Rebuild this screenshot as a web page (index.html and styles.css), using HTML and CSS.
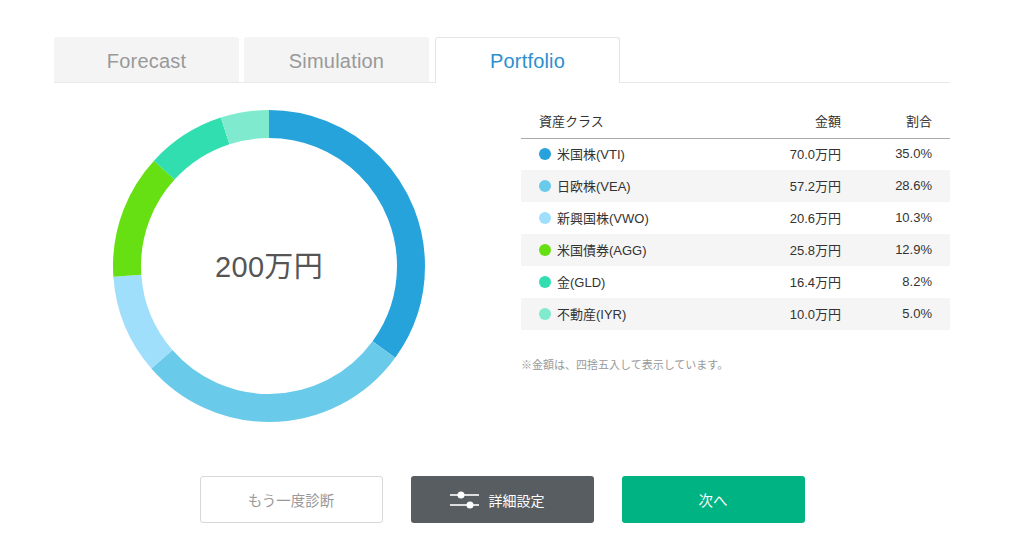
FILE: index.html
```html
<!DOCTYPE html>
<html lang="ja">
<head>
<meta charset="utf-8">
<title>Portfolio</title>
<link rel="stylesheet" href="styles.css">
</head>
<body>
<div class="page">
  <nav class="tabs">
    <div class="tab">Forecast</div>
    <div class="tab">Simulation</div>
    <div class="tab active">Portfolio</div>
  </nav>
  <section class="main">
    <div class="chart">
      <svg class="donut" viewBox="0 0 312 312" width="312" height="312">
        <g transform="rotate(-90 156 156)" fill="none" stroke-width="28">
          <circle cx="156" cy="156" r="142" pathLength="100" stroke="#27a3dc" stroke-dasharray="35 65" stroke-dashoffset="0"/>
          <circle cx="156" cy="156" r="142" pathLength="100" stroke="#6acae9" stroke-dasharray="28.6 71.4" stroke-dashoffset="-35"/>
          <circle cx="156" cy="156" r="142" pathLength="100" stroke="#a0dffb" stroke-dasharray="10.3 89.7" stroke-dashoffset="-63.6"/>
          <circle cx="156" cy="156" r="142" pathLength="100" stroke="#66e013" stroke-dasharray="12.9 87.1" stroke-dashoffset="-73.9"/>
          <circle cx="156" cy="156" r="142" pathLength="100" stroke="#30deb0" stroke-dasharray="8.2 91.8" stroke-dashoffset="-86.8"/>
          <circle cx="156" cy="156" r="142" pathLength="100" stroke="#80eace" stroke-dasharray="5 95" stroke-dashoffset="-95"/>
        </g>
      </svg>
      <div class="total">200万円</div>
    </div>
    <div class="summary">
      <table class="assets">
        <thead>
          <tr><th class="name">資産クラス</th><th class="amt">金額</th><th class="pct">割合</th></tr>
        </thead>
        <tbody>
          <tr><td class="name"><span class="dot c1"></span>米国株(VTI)</td><td class="amt">70.0万円</td><td class="pct">35.0%</td></tr>
          <tr><td class="name"><span class="dot c2"></span>日欧株(VEA)</td><td class="amt">57.2万円</td><td class="pct">28.6%</td></tr>
          <tr><td class="name"><span class="dot c3"></span>新興国株(VWO)</td><td class="amt">20.6万円</td><td class="pct">10.3%</td></tr>
          <tr><td class="name"><span class="dot c4"></span>米国債券(AGG)</td><td class="amt">25.8万円</td><td class="pct">12.9%</td></tr>
          <tr><td class="name"><span class="dot c5"></span>金(GLD)</td><td class="amt">16.4万円</td><td class="pct">8.2%</td></tr>
          <tr><td class="name"><span class="dot c6"></span>不動産(IYR)</td><td class="amt">10.0万円</td><td class="pct">5.0%</td></tr>
        </tbody>
      </table>
      <p class="note">※金額は、四捨五入して表示しています。</p>
    </div>
  </section>
  <div class="actions">
    <button class="btn btn-outline">もう一度診断</button>
    <button class="btn btn-dark">
      <svg class="icon" width="30" height="18" viewBox="0 0 30 18">
        <g stroke="#fff" stroke-width="1.6" fill="none">
          <line x1="0" y1="4" x2="29" y2="4"/>
          <line x1="0" y1="14" x2="29" y2="14"/>
        </g>
        <circle cx="11" cy="4" r="3.5" fill="#fff"/>
        <circle cx="20" cy="14" r="3.5" fill="#fff"/>
      </svg>
      <span>詳細設定</span>
    </button>
    <button class="btn btn-green">次へ</button>
  </div>
</div>
</body>
</html>
```

FILE: styles.css
```css
* { box-sizing: border-box; }
html, body { margin: 0; padding: 0; background: #fff; }
body {
  font-family: "Liberation Sans", "Noto Sans CJK JP", sans-serif;
  color: #333;
}
.page {
  width: 896px;
  margin-left: 54px;
  padding-top: 37px;
}
.tabs {
  display: flex;
  gap: 5px;
  height: 46px;
  border-bottom: 1px solid #e8e8e8;
}
.tab {
  width: 185px;
  height: 45px;
  background: #f4f4f4;
  border-radius: 3px 3px 0 0;
  color: #999;
  font-size: 20px;
  display: flex;
  align-items: center;
  justify-content: center;
  padding-top: 3px;
  letter-spacing: 0.2px;
}
.tab.active {
  background: #fff;
  color: #2b8fcf;
  border: 1px solid #e6e6e6;
  border-bottom: none;
  height: 46px;
  width: 185px;
  margin-left: 1px;
  padding-top: 2px;
  padding-bottom: 0;
}
.main {
  display: flex;
  align-items: flex-start;
  padding-top: 23px;
}
.chart {
  position: relative;
  width: 312px;
  height: 312px;
  margin-left: 59px;
  margin-top: 4px;
}
.donut { display: block; }
.total {
  position: absolute;
  inset: 0;
  display: flex;
  align-items: center;
  justify-content: center;
  font-size: 29px;
  color: #555;
  padding-bottom: 4px;
  letter-spacing: 0.3px;
}
.summary {
  margin-left: auto;
  width: 429px;
}
.assets {
  width: 100%;
  border-collapse: collapse;
  font-size: 13px;
}
.assets th {
  font-weight: normal;
  height: 32px;
  border-bottom: 1px solid #aaa;
  color: #333;
  padding: 0 0 2px;
}
.assets td {
  height: 32px;
  padding: 0 0 2px;
}
.assets tbody tr:nth-child(even) { background: #f5f5f5; }
.assets th.name { text-align: left; padding-left: 18px; }
.assets td.name { padding-left: 18px; }
.assets .amt { text-align: right; width: 140px; }
.assets th.pct, .assets td.pct { text-align: right; width: 109px; padding-right: 18px; }
.dot {
  display: inline-block;
  width: 12px;
  height: 12px;
  border-radius: 50%;
  vertical-align: -1px;
  margin-right: 6px;
}
.c1 { background: #27a3dc; }
.c2 { background: #6acae9; }
.c3 { background: #a0dffb; }
.c4 { background: #66e013; }
.c5 { background: #30deb0; }
.c6 { background: #80eace; }
.note {
  margin: 26px 0 0;
  font-size: 11px;
  color: #999;
}
.actions {
  display: flex;
  justify-content: center;
  gap: 28px;
  margin-top: 54px;
}
.btn {
  width: 183px;
  height: 47px;
  border-radius: 3px;
  font-family: "Liberation Sans", "Noto Sans CJK JP", sans-serif;
  font-size: 14.5px;
  display: flex;
  align-items: center;
  justify-content: center;
  gap: 9px;
  border: 1px solid transparent;
  padding: 0;
}
.btn-outline {
  background: #fff;
  border-color: #d8d8d8;
  color: #999;
}
.btn-dark {
  background: #575d61;
  color: #fff;
  font-size: 14px;
  padding-right: 10px;
}
.btn-green {
  background: #00b382;
  color: #fff;
}
.icon { display: block; }
```
